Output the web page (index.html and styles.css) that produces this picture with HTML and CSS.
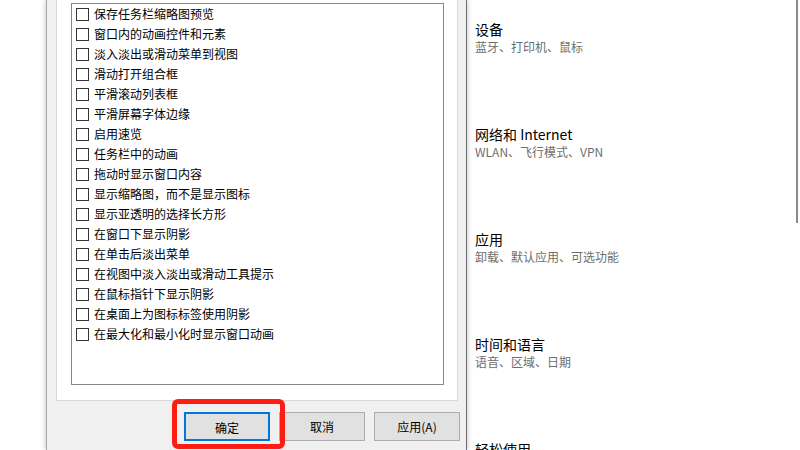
FILE: index.html
```html
<!DOCTYPE html>
<html lang="zh-CN">
<head>
<meta charset="utf-8">
<title>性能选项</title>
<link rel="stylesheet" href="styles.css">
</head>
<body>
<div class="screen">
  <div class="backdrop"></div>
  <div class="dialog">
    <div class="tab-panel">
      <ul class="listbox">
        <li class="item"><span class="check"></span><span>保存任务栏缩略图预览</span></li>
        <li class="item"><span class="check"></span><span>窗口内的动画控件和元素</span></li>
        <li class="item"><span class="check"></span><span>淡入淡出或滑动菜单到视图</span></li>
        <li class="item"><span class="check"></span><span>滑动打开组合框</span></li>
        <li class="item"><span class="check"></span><span>平滑滚动列表框</span></li>
        <li class="item"><span class="check"></span><span>平滑屏幕字体边缘</span></li>
        <li class="item"><span class="check"></span><span>启用速览</span></li>
        <li class="item"><span class="check"></span><span>任务栏中的动画</span></li>
        <li class="item"><span class="check"></span><span>拖动时显示窗口内容</span></li>
        <li class="item"><span class="check"></span><span>显示缩略图，而不是显示图标</span></li>
        <li class="item"><span class="check"></span><span>显示亚透明的选择长方形</span></li>
        <li class="item"><span class="check"></span><span>在窗口下显示阴影</span></li>
        <li class="item"><span class="check"></span><span>在单击后淡出菜单</span></li>
        <li class="item"><span class="check"></span><span>在视图中淡入淡出或滑动工具提示</span></li>
        <li class="item"><span class="check"></span><span>在鼠标指针下显示阴影</span></li>
        <li class="item"><span class="check"></span><span>在桌面上为图标标签使用阴影</span></li>
        <li class="item"><span class="check"></span><span>在最大化和最小化时显示窗口动画</span></li>
      </ul>
    </div>
    <div class="buttons">
      <button class="btn btn-default">确定</button>
      <button class="btn">取消</button>
      <button class="btn">应用(A)</button>
    </div>
    <div class="highlight"></div>
  </div>
  <div class="settings">
    <div class="group">
      <div class="title">设备</div>
      <div class="sub">蓝牙、打印机、鼠标</div>
    </div>
    <div class="group">
      <div class="title">网络和 Internet</div>
      <div class="sub">WLAN、飞行模式、VPN</div>
    </div>
    <div class="group">
      <div class="title">应用</div>
      <div class="sub">卸载、默认应用、可选功能</div>
    </div>
    <div class="group">
      <div class="title">时间和语言</div>
      <div class="sub">语音、区域、日期</div>
    </div>
    <div class="group">
      <div class="title">轻松使用</div>
      <div class="sub">讲述人、放大镜、高对比度</div>
    </div>
    <div class="scroll-thumb"></div>
  </div>
</div>
</body>
</html>
```

FILE: styles.css
```css
* { box-sizing: border-box; }
html, body {
  margin: 0;
  padding: 0;
  background: #ffffff;
}
body {
  font-family: "Noto Sans CJK SC", "Noto Sans", "Liberation Sans", sans-serif;
  font-size: 12px;
  color: #000;
}
.screen {
  width: 800px;
  height: 450px;
  overflow: hidden;
  display: flex;
  position: relative;
}
.backdrop {
  width: 46px;
  flex: none;
  background: #ffffff;
}
.dialog {
  width: 421px;
  flex: none;
  position: relative;
  z-index: 2;
  background: #f0f0f0;
  border-left: 1px solid #a9a9a9;
  border-right: 1px solid #6f6f6f;
  box-shadow: 0 0 5px rgba(0,0,0,0.28);
  padding-left: 9px;
  padding-right: 6px;
}
.tab-panel {
  width: 402px;
  height: 411px;
  margin-top: -10px;
  background: #ffffff;
  border: 1px solid #d9d9d9;
  padding-top: 12px;
  padding-left: 14px;
}
.listbox {
  list-style: none;
  margin: 0;
  padding: 0 0 0 4px;
  width: 373px;
  height: 382px;
  border: 1px solid #828790;
  background: #fff;
}
.item {
  height: 20px;
  line-height: 20px;
  display: flex;
  align-items: center;
  white-space: nowrap;
}
.check {
  width: 13px;
  height: 13px;
  border: 1px solid #333333;
  background: #fff;
  margin-right: 5px;
  flex: none;
}
.buttons {
  display: flex;
  justify-content: flex-end;
  gap: 9px;
  margin-top: 11px;
  padding-right: 0;
}
.btn {
  width: 86px;
  height: 29px;
  background: #e1e1e1;
  border: 1px solid #adadad;
  font-family: inherit;
  font-size: 12px;
  color: #000;
  padding: 0;
  margin: 0;
  line-height: 27px;
}
.btn-default {
  border: 2px solid #0078d7;
}
.highlight {
  position: absolute;
  left: 125px;
  top: 399px;
  width: 113px;
  height: 50px;
  border: 5px solid #fe1d12;
  border-radius: 6px;
}
.settings {
  flex: 1;
  background: #ffffff;
  padding-left: 8px;
  padding-top: 20px;
  position: relative;
}
.group {
  height: 105px;
}
.title {
  font-size: 14px;
  line-height: 18px;
  color: #000;
  white-space: nowrap;
}
.sub {
  font-size: 12px;
  line-height: 18px;
  color: #6e6e6e;
  white-space: nowrap;
}
.scroll-thumb {
  position: absolute;
  right: 2px;
  top: 0;
  width: 2px;
  height: 223px;
  background: #8a8a8a;
}
```
